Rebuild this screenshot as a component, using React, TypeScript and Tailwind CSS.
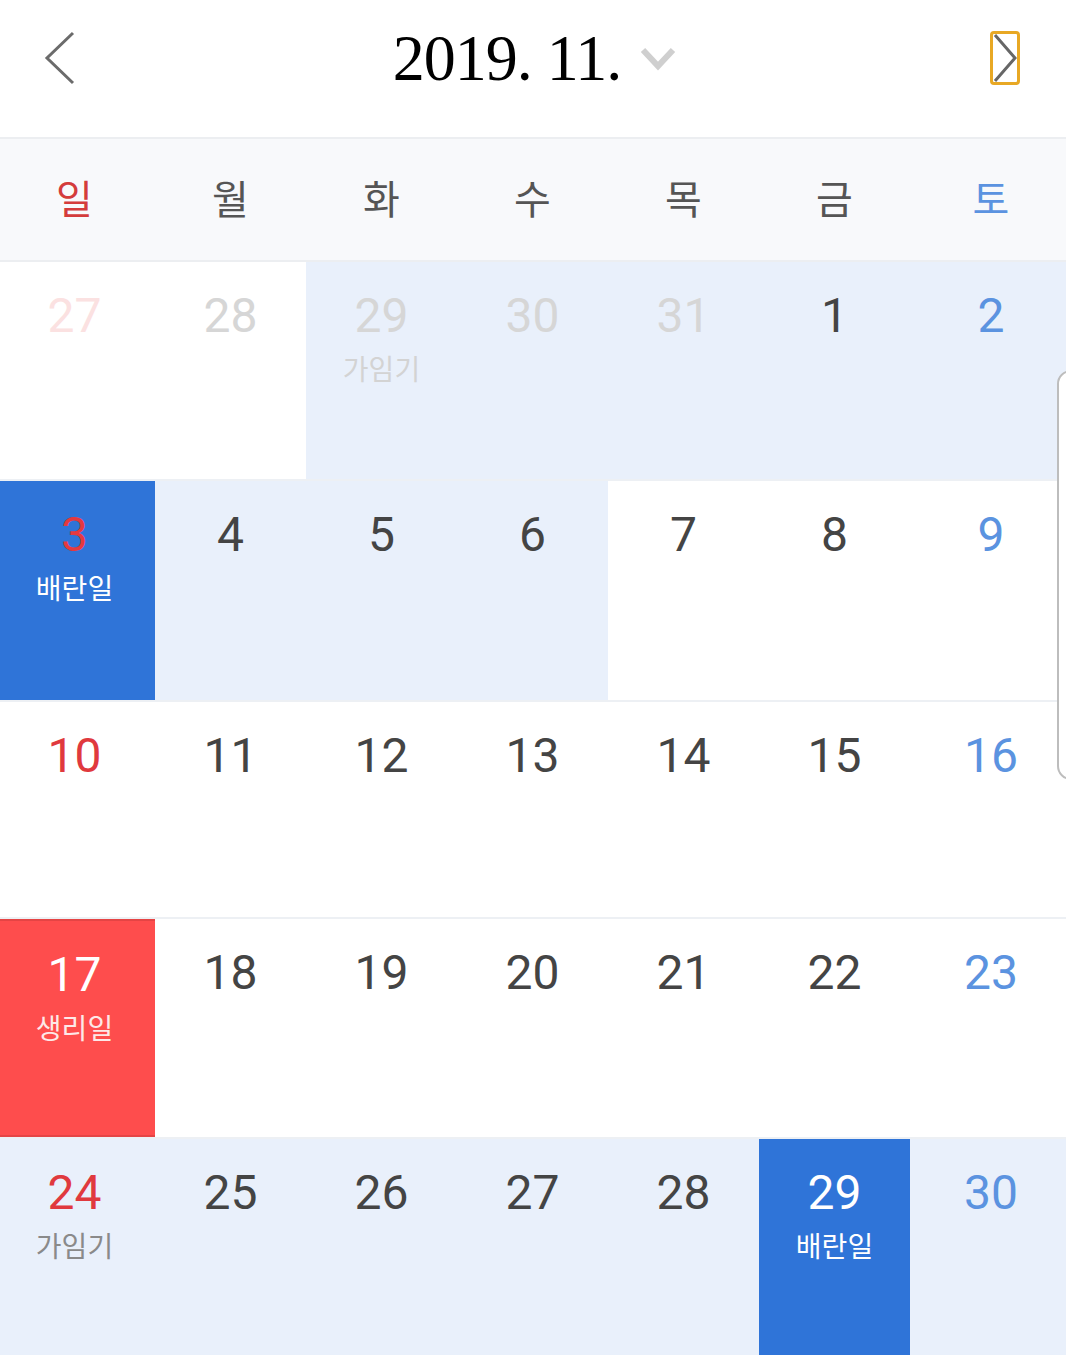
import React from 'react';

type Cell = {
  day: number;
  label?: string;
  bg: 'white' | 'light' | 'blue' | 'red';
  num: string;
  sub?: string;
};

const W = 'white' as const;
const L = 'light' as const;

const rows: { h: string; cells: Cell[] }[] = [
  {
    h: 'h-[217px]',
    cells: [
      { day: 27, bg: W, num: 'text-[#fbe1e1]' },
      { day: 28, bg: W, num: 'text-[#d6d6d6]' },
      { day: 29, bg: L, num: 'text-[#d6d6d6]', label: '가임기', sub: 'text-[#d3d3d3]' },
      { day: 30, bg: L, num: 'text-[#d6d6d6]' },
      { day: 31, bg: L, num: 'text-[#d6d6d6]' },
      { day: 1, bg: L, num: 'text-[#444444]' },
      { day: 2, bg: L, num: 'text-[#5b93e0]' },
    ],
  },
  {
    h: 'h-[221px]',
    cells: [
      { day: 3, bg: 'blue', num: 'text-[#e5393f]', label: '배란일', sub: 'text-white' },
      { day: 4, bg: L, num: 'text-[#444444]' },
      { day: 5, bg: L, num: 'text-[#444444]' },
      { day: 6, bg: L, num: 'text-[#444444]' },
      { day: 7, bg: W, num: 'text-[#444444]' },
      { day: 8, bg: W, num: 'text-[#444444]' },
      { day: 9, bg: W, num: 'text-[#5b93e0]' },
    ],
  },
  {
    h: 'h-[217px]',
    cells: [
      { day: 10, bg: W, num: 'text-[#e0393e]' },
      { day: 11, bg: W, num: 'text-[#444444]' },
      { day: 12, bg: W, num: 'text-[#444444]' },
      { day: 13, bg: W, num: 'text-[#444444]' },
      { day: 14, bg: W, num: 'text-[#444444]' },
      { day: 15, bg: W, num: 'text-[#444444]' },
      { day: 16, bg: W, num: 'text-[#5b93e0]' },
    ],
  },
  {
    h: 'h-[220px]',
    cells: [
      { day: 17, bg: 'red', num: 'text-white', label: '생리일', sub: 'text-[#fde8e8]' },
      { day: 18, bg: W, num: 'text-[#444444]' },
      { day: 19, bg: W, num: 'text-[#444444]' },
      { day: 20, bg: W, num: 'text-[#444444]' },
      { day: 21, bg: W, num: 'text-[#444444]' },
      { day: 22, bg: W, num: 'text-[#444444]' },
      { day: 23, bg: W, num: 'text-[#5b93e0]' },
    ],
  },
  {
    h: 'h-[218px]',
    cells: [
      { day: 24, bg: L, num: 'text-[#e0393e]', label: '가임기', sub: 'text-[#8a8a8a]' },
      { day: 25, bg: L, num: 'text-[#444444]' },
      { day: 26, bg: L, num: 'text-[#444444]' },
      { day: 27, bg: L, num: 'text-[#444444]' },
      { day: 28, bg: L, num: 'text-[#444444]' },
      { day: 29, bg: 'blue', num: 'text-white', label: '배란일', sub: 'text-white' },
      { day: 30, bg: L, num: 'text-[#5b93e0]' },
    ],
  },
];

const bgClass: Record<Cell['bg'], string> = {
  white: 'bg-white',
  light: 'bg-[#e9f0fb]',
  blue: 'bg-[#2f74d8]',
  red: 'bg-[#fe4d4d] border-y-2 border-[#e54444]',
};

const weekdays = [
  { t: '일', c: 'text-[#d43c3c]' },
  { t: '월', c: 'text-[#555555]' },
  { t: '화', c: 'text-[#555555]' },
  { t: '수', c: 'text-[#555555]' },
  { t: '목', c: 'text-[#555555]' },
  { t: '금', c: 'text-[#555555]' },
  { t: '토', c: 'text-[#5b93e0]' },
];

const cols = 'grid grid-cols-[155px_151px_151px_151px_151px_151px_1fr]';

export default function App() {
  return (
    <div className="relative w-[1066px] h-[1364px] bg-white overflow-hidden font-['Roboto','Noto_Sans_CJK_KR',sans-serif]">
      {/* Header */}
      <div className="h-[139px] flex items-center border-b-2 border-[#eceef1] px-[44px] pb-[22px]">
        <div className="flex-1 flex">
          <svg width="32" height="54" viewBox="0 0 32 54">
            <polyline points="29,2 3,27 29,52" fill="none" stroke="#6b6b6b" strokeWidth="3" />
          </svg>
        </div>
        <div className="flex items-center gap-[18px] ml-[4px]">
          <span className="font-['Liberation_Serif',serif] text-[64px] leading-none text-black tracking-[-1px] scale-y-[1.04]">
            2019. 11.
          </span>
          <svg width="38" height="26" viewBox="0 0 38 26" className="mt-[2px]">
            <polyline points="4,4 19,20 34,4" fill="none" stroke="#cfcfcf" strokeWidth="6" />
          </svg>
        </div>
        <div className="flex-1 flex justify-end">
          <div className="w-[30px] h-[54px] border-[3px] border-[#e8a824] rounded-[4px] flex items-center justify-center mr-[2px]">
            <svg width="24" height="48" viewBox="0 0 24 48">
              <polyline points="2,1 22,24 2,47" fill="none" stroke="#666666" strokeWidth="3" />
            </svg>
          </div>
        </div>
      </div>

      {/* Weekdays */}
      <div className={`${cols} h-[123px] bg-[#f8f9fb] border-b-2 border-[#eceef1]`}>
        {weekdays.map((w, i) => (
          <div
            key={w.t}
            className={`flex items-center justify-center pb-[6px] font-['Noto_Sans_CJK_KR',sans-serif] text-[40px] ${w.c} ${
              i === 0 ? 'pr-[6px]' : ''
            } ${i === 6 ? 'pl-[6px]' : ''}`}
          >
            {w.t}
          </div>
        ))}
      </div>

      {/* Days */}
      {rows.map((r, ri) => (
        <div key={ri} className={`${cols} ${r.h} ${ri > 0 ? 'border-t-2 border-[#edf0f4]' : ''}`}>
          {r.cells.map((c, ci) => (
            <div
              key={ci}
              className={`${bgClass[c.bg]} flex flex-col items-center pt-[26px] ${ci === 0 ? 'pr-[6px]' : ''} ${
                ci === 6 ? 'pl-[6px]' : ''
              }`}
            >
              <span className={`text-[48px] leading-[56px] ${c.num}`}>{c.day}</span>
              {c.label && (
                <span className={`font-['Noto_Sans_CJK_KR',sans-serif] text-[28px] leading-[40px] mt-[4px] ${c.sub}`}>
                  {c.label}
                </span>
              )}
            </div>
          ))}
        </div>
      ))}

      {/* Scroll handle overlay */}
      <div className="absolute left-[1057px] top-[370px] w-[30px] h-[410px] rounded-[14px] border-2 border-[#bdbdbd] bg-white" />
    </div>
  );
}
